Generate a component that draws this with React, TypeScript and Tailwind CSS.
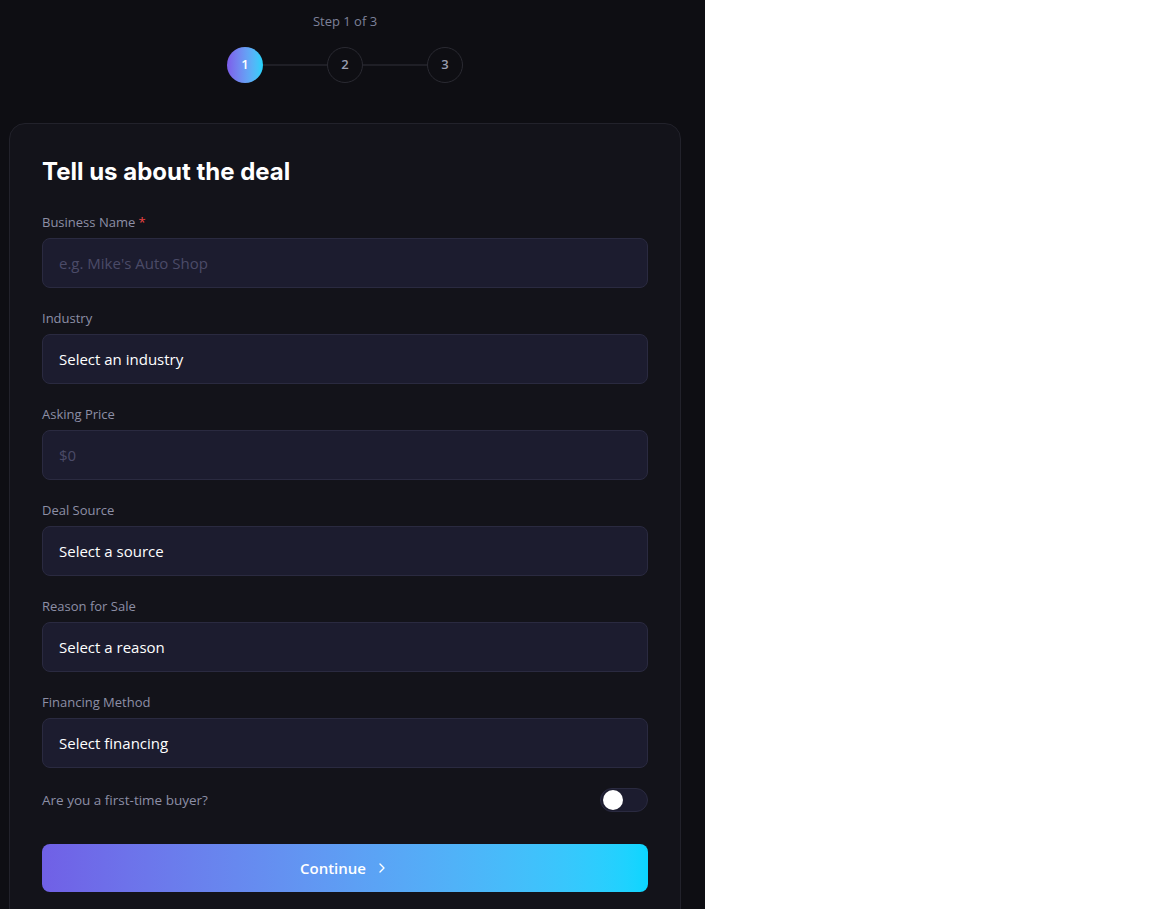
import { ChevronRight } from "lucide-react";

const fields = [
  { label: "Business Name", required: true, value: "e.g. Mike's Auto Shop", placeholder: true },
  { label: "Industry", value: "Select an industry" },
  { label: "Asking Price", value: "$0", placeholder: true },
  { label: "Deal Source", value: "Select a source" },
  { label: "Reason for Sale", value: "Select a reason" },
  { label: "Financing Method", value: "Select financing" },
];

function Stepper() {
  return (
    <div className="flex flex-col items-center">
      <div className="text-[13px] leading-5 text-[#7d8199]">Step 1 of 3</div>
      <div className="mt-4 flex items-center">
        <div className="w-9 h-9 rounded-full bg-gradient-to-r from-[#7c5cea] to-[#1ed3fb] flex items-center justify-center text-[13px] font-semibold text-white">
          1
        </div>
        <div className="w-16 h-[2px] bg-[#1f1f26]" />
        <div className="w-9 h-9 rounded-full border border-[#2a2a32] flex items-center justify-center text-[13px] font-semibold text-[#9a9db0]">
          2
        </div>
        <div className="w-16 h-[2px] bg-[#1f1f26]" />
        <div className="w-9 h-9 rounded-full border border-[#2a2a32] flex items-center justify-center text-[13px] font-semibold text-[#9a9db0]">
          3
        </div>
      </div>
    </div>
  );
}

export default function App() {
  return (
    <div className="w-[705px] min-h-screen bg-[#0e0e13] pl-[9px] pt-[11px] font-['Open_Sans','Noto_Sans',sans-serif]">
      <div className="w-[672px]">
        <Stepper />

        <div className="mt-10 rounded-2xl border border-[#22222b] bg-[#13131a] px-8 pt-8 pb-10">
          <h2 className="font-['Inter',sans-serif] text-2xl leading-8 font-bold tracking-normal text-white">
            Tell us about the deal
          </h2>

          <div className="mt-6 flex flex-col gap-5">
            {fields.map((f) => (
              <div key={f.label} className="flex flex-col gap-1.5">
                <label className="text-[13px] leading-5 text-[#8d8fa6]">
                  {f.label}
                  {f.required && <span className="text-[#ef4444]"> *</span>}
                </label>
                <div className="h-[50px] rounded-lg border border-[#2a2a40] bg-[#1c1c2f] px-4 flex items-center">
                  <span className={f.placeholder ? "text-[15px] text-[#4b4b68]" : "text-[15px] text-white"}>
                    {f.value}
                  </span>
                </div>
              </div>
            ))}

            <div className="h-6 flex items-center justify-between">
              <span className="text-[13.5px] text-[#8d8fa6]">Are you a first-time buyer?</span>
              <div className="w-12 h-6 rounded-full border border-[#2a2a40] bg-[#1c1c2f] flex items-center px-[2px]">
                <div className="w-[20px] h-[20px] rounded-full bg-white" />
              </div>
            </div>
          </div>

          <button className="mt-8 w-full h-12 rounded-lg bg-gradient-to-r from-[#7060e6] to-[#0ad6ff] flex items-center justify-center gap-2 text-[15px] font-semibold text-white">
            Continue
            <ChevronRight size={16} strokeWidth={2} />
          </button>
        </div>
      </div>
    </div>
  );
}
